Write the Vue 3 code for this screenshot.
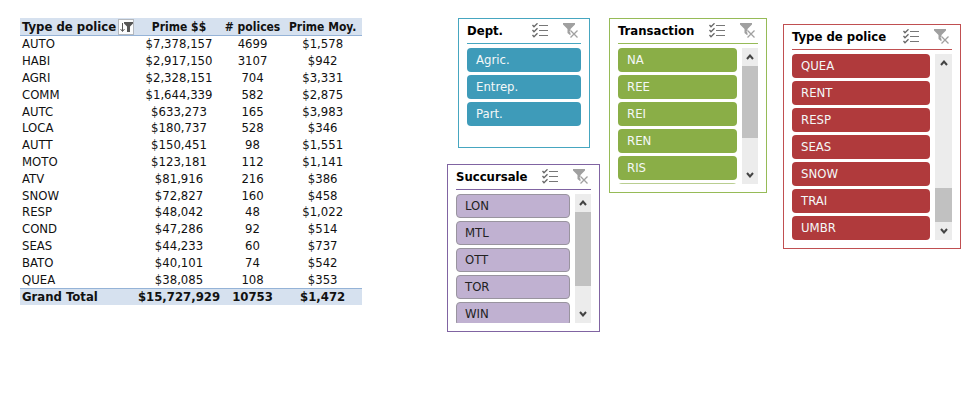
<template>
	<main class="dashboard">
		<table class="pivot">
			<thead>
				<tr>
					<th scope="col" class="label">
						<span class="label-head">
							Type de police
							<button type="button" class="filter-button" aria-label="Filtrer et trier">
								<svg viewBox="0 0 14 14" aria-hidden="true">
									<path d="M3.500 3v8M1.500 9l2 2.500 2-2.500" fill="none" stroke="#555" />
									<path d="M5 2h9v1.500l-3 3V12H8V6.500l-3-3z" fill="#555" />
								</svg>
							</button>
						</span>
					</th>
					<th scope="col">Prime $$</th>
					<th scope="col"># polices</th>
					<th scope="col">Prime Moy.</th>
				</tr>
			</thead>
			<tbody>
				<tr v-for="row in rows" :key="row[0]">
					<th scope="row" class="label">{{ row[0] }}</th>
					<td>{{ row[1] }}</td>
					<td>{{ row[2] }}</td>
					<td>{{ row[3] }}</td>
				</tr>
			</tbody>
			<tfoot>
				<tr>
					<th scope="row" class="label">Grand Total</th>
					<td>$15,727,929</td>
					<td>10753</td>
					<td>$1,472</td>
				</tr>
			</tfoot>
		</table>

		<div v-for="(column, index) in columns" :key="index" class="slicer-column" :class="`column-${index + 1}`">
			<section v-for="slicer in column" :key="slicer.id" class="slicer" :class="slicer.id" :aria-label="slicer.title">
				<header class="slicer-header">
					<h2>{{ slicer.title }}</h2>
					<button type="button" class="icon-button" aria-label="Sélection multiple">
						<svg viewBox="0 0 16 16" aria-hidden="true" fill="none" stroke="#777">
							<path d="M7 2.500h9M7 7.500h9M7 12.500h9" />
							<path d="M.5 2l1.500 1.700L5.500 .3M.5 7l1.500 1.700L5.500 5.300M.5 12l1.500 1.700L5.500 10.300" stroke="#666" stroke-width="1.300" />
						</svg>
					</button>
					<button type="button" class="icon-button" aria-label="Effacer le filtre">
						<svg viewBox="0 0 16 16" aria-hidden="true">
							<path d="M0 0h12v1.500L7.500 6v6.500L4.500 10V6L0 1.500z" fill="#a0a0a0" />
							<path d="M7.500 7.500l7 7M14.500 7.500l-7 7" fill="none" stroke="#fff" stroke-width="3" />
							<path d="M7.500 7.500l7 7M14.500 7.500l-7 7" fill="none" stroke="#a0a0a0" stroke-width="1.300" />
						</svg>
					</button>
				</header>
				<div class="slicer-body">
					<div class="items">
						<button v-for="item in slicer.items" :key="item" type="button" class="item">{{ item }}</button>
						<span v-if="slicer.more" class="item item-empty"></span>
					</div>
					<div v-if="slicer.thumb" class="scrollbar">
						<button type="button" class="arrow" aria-label="Défiler vers le haut">
							<svg viewBox="0 0 8 6" aria-hidden="true"><path d="M1 5l3-3.500L7 5" /></svg>
						</button>
						<div class="track">
							<div class="thumb" :style="{ marginTop: slicer.thumb.start, height: slicer.thumb.size }"></div>
						</div>
						<button type="button" class="arrow" aria-label="Défiler vers le bas">
							<svg viewBox="0 0 8 6" aria-hidden="true"><path d="M1 1l3 3.500L7 1" /></svg>
						</button>
					</div>
				</div>
			</section>
		</div>
	</main>
</template>

<script setup>
const rows = [
	['AUTO', '$7,378,157', '4699', '$1,578'],
	['HABI', '$2,917,150', '3107', '$942'],
	['AGRI', '$2,328,151', '704', '$3,331'],
	['COMM', '$1,644,339', '582', '$2,875'],
	['AUTC', '$633,273', '165', '$3,983'],
	['LOCA', '$180,737', '528', '$346'],
	['AUTT', '$150,451', '98', '$1,551'],
	['MOTO', '$123,181', '112', '$1,141'],
	['ATV', '$81,916', '216', '$386'],
	['SNOW', '$72,827', '160', '$458'],
	['RESP', '$48,042', '48', '$1,022'],
	['COND', '$47,286', '92', '$514'],
	['SEAS', '$44,233', '60', '$737'],
	['BATO', '$40,101', '74', '$542'],
	['QUEA', '$38,085', '108', '$353'],
];

const columns = [
	[
		{ id: 'dept', title: 'Dept.', items: ['Agric.', 'Entrep.', 'Part.'] },
		{
			id: 'succursale',
			title: 'Succursale',
			items: ['LON', 'MTL', 'OTT', 'TOR', 'WIN'],
			thumb: { start: '0', size: '80%' },
		},
	],
	[
		{
			id: 'transaction',
			title: 'Transaction',
			items: ['NA', 'REE', 'REI', 'REN', 'RIS'],
			more: true,
			thumb: { start: '0', size: '72%' },
		},
	],
	[
		{
			id: 'police',
			title: 'Type de police',
			items: ['QUEA', 'RENT', 'RESP', 'SEAS', 'SNOW', 'TRAI', 'UMBR'],
			thumb: { start: 'auto', size: '23%' },
		},
	],
];
</script>

<style>
body {
	margin: 0;
	background: #fff;
}
</style>

<style scoped>
.dashboard {
	display: flex;
	align-items: flex-start;
	padding: 18px 14px 18px 20px;
	font-family: "DejaVu Sans Condensed", "Noto Sans", sans-serif;
	font-size: 13px;
	line-height: 16px;
	color: #111;
}

.dashboard * {
	box-sizing: border-box;
}

button {
	padding: 0;
	border: 0;
	background: none;
	color: inherit;
	font: inherit;
	cursor: pointer;
}

svg {
	display: block;
}

.pivot {
	flex: 342 1 0;
	height: 287px;
	margin-right: 85px;
	border-collapse: separate;
	border-spacing: 0;
	table-layout: fixed;
	text-align: center;
	white-space: nowrap;
}

.pivot th,
.pivot td {
	padding: 0;
}

.pivot thead th {
	height: 18px;
	padding-top: 1px;
	border-bottom: 1px solid #95b3d7;
	background: #d6e1ef;
	font-size: 12px;
}

.pivot thead th:nth-child(1) {
	width: 34%;
}

.pivot thead th:nth-child(2) {
	width: 25%;
}

.pivot thead th:nth-child(3) {
	width: 18%;
}

.pivot .label {
	padding-left: 2px;
	font-size: 13px;
	text-align: left;
}

.pivot tbody th {
	font-weight: 400;
}

.pivot tfoot th,
.pivot tfoot td {
	border-top: 1px solid #95b3d7;
	background: #d6e1ef;
	font-weight: 700;
}

.label-head {
	display: flex;
	align-items: center;
	justify-content: space-between;
	padding-right: 2px;
}

.filter-button {
	width: 16px;
	height: 16px;
	border: 1px solid #b4b8be;
	background: #fbfcfd;
}

.slicer-column {
	display: flex;
	flex-direction: column;
	gap: 16px;
	min-width: 0;
}

.column-1 {
	flex: 153 1 0;
}

.column-2 {
	flex: 158 1 0;
	margin: 0 16px 0 9px;
}

.column-3 {
	flex: 178 1 0;
	margin-top: 6px;
}

.slicer {
	padding: 0 8px 8px;
	border: 1px solid var(--line);
	background: #fff;
}

.dept {
	--line: #46a6c0;
	--fill: #3e9bb9;
	min-height: 130px;
	margin: 0 10px 0 11px;
}

.transaction {
	--line: #96bb57;
	--fill: #8aae47;
}

.police {
	--line: #c04f51;
	--fill: #b03a3c;
}

.succursale {
	--line: #8064a2;
	--fill: #c0b1d1;
}

.slicer-header {
	display: flex;
	align-items: center;
	gap: 15px;
	height: 25px;
	margin-bottom: 4px;
	padding-right: 2px;
	border-bottom: 1px solid var(--line);
}

.slicer-header h2 {
	flex: 1;
	min-width: 0;
	margin: 0;
	font-size: 13px;
	font-weight: 700;
	color: #000;
	white-space: nowrap;
}

.icon-button {
	width: 16px;
	height: 16px;
}

.slicer-body {
	display: flex;
	gap: 5px;
}

.items {
	display: flex;
	flex: 1;
	flex-direction: column;
	gap: 3px;
	overflow: hidden;
}

.transaction .items {
	height: 136px;
}

.succursale .items {
	height: 129px;
}

.item {
	flex: none;
	height: 24px;
	padding: 0 9px;
	border-radius: 4px;
	background: var(--fill);
	color: #f4f8f8;
	text-align: left;
}

.succursale .item {
	border: 1px solid #99949f;
	padding: 0 8px;
	color: #222;
}

.item-empty {
	opacity: 0.6;
}

.scrollbar {
	display: flex;
	flex-direction: column;
	width: 16px;
	background: #ececec;
}

.police .scrollbar {
	width: 17px;
}

.track {
	display: flex;
	flex: 1;
	flex-direction: column;
}

.thumb {
	background: #c1c1c1;
}

.arrow {
	display: flex;
	align-items: center;
	justify-content: center;
	height: 18px;
}

.arrow svg {
	width: 8px;
	height: 6px;
	fill: none;
	stroke: #444;
	stroke-width: 2;
}
</style>
